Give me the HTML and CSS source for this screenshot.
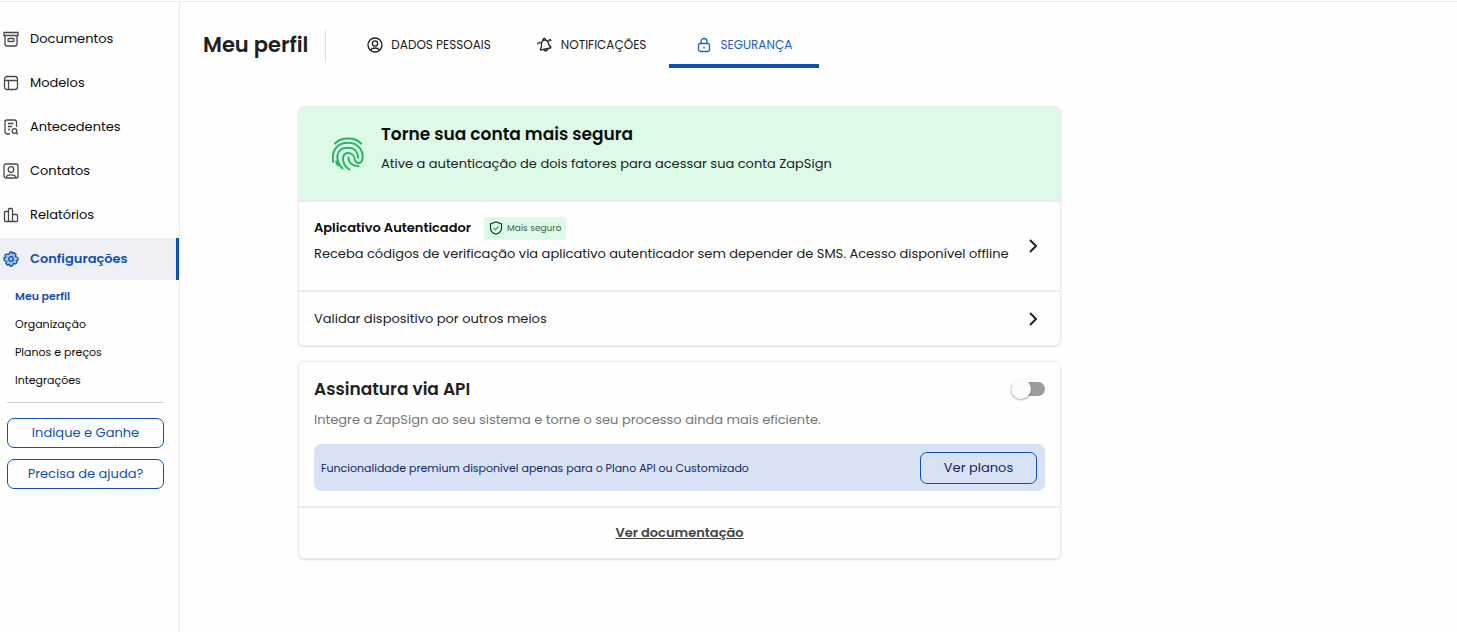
FILE: index.html
```html
<!DOCTYPE html>
<html lang="pt-BR">
<head>
<meta charset="utf-8">
<meta name="viewport" content="width=device-width, initial-scale=1">
<title>Meu perfil</title>
<link rel="stylesheet" href="styles.css">
</head>
<body>
<div class="app">
  <aside class="sidebar">
    <nav class="menu" aria-label="Principal">
      <a class="menu-item" href="#"><svg class="icon" viewBox="0 0 16 16"><path d="M1 1.500h14v3H1zM2 4.500v8.500a2 2 0 0 0 2 2h8a2 2 0 0 0 2-2V4.500"/><rect x="5" y="7.500" width="6" height="3" rx="1"/></svg>Documentos</a>
      <a class="menu-item" href="#"><svg class="icon" viewBox="0 0 16 16"><rect x="1.500" y="1.500" width="13" height="13" rx="2.500"/><path d="M1.500 5.500h13M5.500 5.500v9"/></svg>Modelos</a>
      <a class="menu-item" href="#"><svg class="icon" viewBox="0 0 16 16"><path d="M7 15H4a2 2 0 0 1-2-2V3a2 2 0 0 1 2-2h7.500a2 2 0 0 1 2 2v5M5 4.500h5.500M5 7.500h4M5 10.500h2"/><circle cx="11.500" cy="12" r="2.300"/><path d="M13.200 13.700l1.800 1.600"/></svg>Antecedentes</a>
      <a class="menu-item" href="#"><svg class="icon" viewBox="0 0 16 16"><rect x="1" y="1" width="14" height="14" rx="2"/><circle cx="8" cy="6.500" r="2.800"/><path d="M3 14.500c.5-2 2.500-2.700 5-2.700s4.500.7 5 2.700"/></svg>Contatos</a>
      <a class="menu-item" href="#"><svg class="icon" viewBox="0 0 16 16"><path d="M5.500 14.500h-3a1 1 0 0 1-1-1v-8a1 1 0 0 1 1-1h3M5.500 14.500v-12a1 1 0 0 1 1-1h2a1 1 0 0 1 1 1v12zM9.500 7.500h4a1 1 0 0 1 1 1v5a1 1 0 0 1-1 1h-4"/></svg>Relatórios</a>
      <a class="menu-item active" href="#" aria-current="true"><svg class="icon gear" viewBox="0 0 16 16"><path d="M6.300 2.700 7 1h2l.7 1.700 1.700-.8 1.600 1.500-.7 1.800L15 7v2l-1.700.8.700 1.800-1.500 1.500-1.800-.7L9 15H7l-.8-1.700-1.800.7-1.500-1.500.7-1.800L1 9V7l1.700-.8L2 4.400l1.500-1.500 1.800.7z"/><circle cx="8" cy="8" r="2.300"/></svg>Configurações</a>
    </nav>
    <nav class="submenu" aria-label="Configurações">
      <a class="sub-item current" href="#" aria-current="page">Meu perfil</a>
      <a class="sub-item" href="#">Organização</a>
      <a class="sub-item" href="#">Planos e preços</a>
      <a class="sub-item" href="#">Integrações</a>
    </nav>
    <div class="side-actions">
      <button class="outline" type="button">Indique e Ganhe</button>
      <button class="outline" type="button">Precisa de ajuda?</button>
    </div>
  </aside>
  <main class="main">
    <header class="header">
      <h1 class="title">Meu perfil</h1>
      <nav class="tabs" aria-label="Perfil">
        <a class="tab" href="#"><svg class="icon" viewBox="0 0 16 16"><circle cx="8" cy="8" r="7"/><circle cx="8" cy="6.500" r="2.600"/><path d="M3.500 13c1-1.500 2.500-2 4.500-2s3.500.5 4.500 2"/></svg>DADOS PESSOAIS</a>
        <a class="tab" href="#"><svg class="icon" viewBox="0 0 16 16"><path d="M4 13c-.7-.1-.8-1-.3-1.600 1-1 1-2 .8-3.600-.3-2.600.8-4.300 2.700-4.700s3.700.7 4.200 3.200c.3 1.600.8 2.400 2 3.100.7.500.6 1.400-.1 1.600zM6.200 3.400 6 2.200c.4-1 1.800-1.200 2.200-.3l.3 1.200M7.200 12.600c.5 2 3 1.900 3.400-.6M1 7.500c-.2-1 0-1.700.3-2.300M2.800 6.500c0-.7.100-1.200.3-1.700M11.300 2.900l1.300 1.400M12.600 1.900l1.700 2"/></svg>NOTIFICAÇÕES</a>
        <a class="tab selected" href="#" aria-current="page"><svg class="icon" viewBox="0 0 16 16"><rect x="2.500" y="6.500" width="11" height="8" rx="2"/><path d="M5 6.500V4.500a3 3 0 0 1 6 0v2M8 9.800v1.600"/></svg>SEGURANÇA</a>
      </nav>
    </header>
    <div class="content">
      <section class="card">
        <div class="banner">
          <svg class="finger" viewBox="0 0 32 34"><path d="M3 6.500C9-.3 23-.3 29 6.500M1.200 25C-1 14 5 5.800 16 5.800s16.500 9.200 14.200 17.200c-1.200 4-6.200 3.800-7.200 0-.8-4-2-7-7-7-4 0-6 4-4.500 9 1 3.500 3 5.800 6 7.500M10.500 31.500C2.500 23 3.500 10.800 16 10.800c7 0 10 4.700 10 10M6 28.500C5 27 4.500 26 4.200 24.500M16.500 20.500c0 5 4 9 10 8.500"/></svg>
          <div>
            <h2 class="heading">Torne sua conta mais segura</h2>
            <p class="text">Ative a autenticação de dois fatores para acessar sua conta ZapSign</p>
          </div>
        </div>
        <a class="row tall" href="#">
          <span class="row-copy">
            <span class="row-title"><strong>Aplicativo Autenticador</strong><span class="badge"><svg class="shield" viewBox="0 0 14 14"><path d="M7 .8 12.500 3v4c0 3-2.300 5.300-5.500 6.300C3.800 12.300 1.500 10 1.500 7V3z"/><path class="tick" d="m4.500 7 1.800 1.800 3.200-3.300"/></svg>Mais seguro</span></span>
            <span class="text">Receba códigos de verificação via aplicativo autenticador sem depender de SMS. Acesso disponível offline</span>
          </span>
          <svg class="chevron" viewBox="0 0 8 14"><path d="m1 1 6 6-6 6"/></svg>
        </a>
        <a class="row" href="#">
          <span class="text">Validar dispositivo por outros meios</span>
          <svg class="chevron" viewBox="0 0 8 14"><path d="m1 1 6 6-6 6"/></svg>
        </a>
      </section>
      <section class="card">
        <div class="api">
          <div class="api-head">
            <h2 class="heading soft"><label for="api">Assinatura via API</label></h2>
            <input class="switch" id="api" type="checkbox" role="switch">
          </div>
          <p class="text muted">Integre a ZapSign ao seu sistema e torne o seu processo ainda mais eficiente.</p>
          <div class="notice">
            <span>Funcionalidade premium disponível apenas para o Plano API ou Customizado</span>
            <button class="outline plans" type="button">Ver planos</button>
          </div>
        </div>
        <div class="doc"><a class="doc-link" href="#">Ver documentação</a></div>
      </section>
    </div>
  </main>
</div>
</body>
</html>
```
FILE: styles.css
```css
* { box-sizing: border-box; }
body { margin: 0; padding-top: 1px; background: #fefefe; color: #212121; font: 13px/20px Poppins, Inter, "Open Sans", sans-serif; }
a { color: inherit; text-decoration: none; }
h1, h2, p { margin: 0; }
svg { fill: none; stroke: currentColor; flex: none; }
.app { display: flex; min-height: calc(100vh - 1px); border-top: 1px solid #ebebeb; }
.sidebar { width: 180px; flex: none; border-right: 1px solid #ebebeb; padding-top: 16px; }
.menu { display: flex; flex-direction: column; gap: 2px; color: #0a0a0a; }
.menu-item { display: flex; align-items: center; gap: 11px; height: 42px; padding: 0 0 0 3px; }
.icon { width: 16px; height: 16px; stroke-width: 1.3; color: #4b4747; }
.menu-item.active { background: #eff0f5; color: #124fb3; font-weight: 600; border-right: 3px solid #124fb3; }
.active .icon { color: #124fb3; }
.gear { fill: #9cc7ec; }
.submenu { display: flex; flex-direction: column; gap: 8px; margin: 0 15px 0 7px; padding: 6px 8px 12px; border-bottom: 1px solid #cfcfcf; font-size: 11px; color: #0a0a0a; }
.current { color: #124fb3; font-weight: 600; }
.side-actions { display: flex; flex-direction: column; gap: 11px; padding: 15px 15px 0 7px; }
.outline { height: 30px; padding: 0; border: 1px solid #124fb3; border-radius: 7px; background: transparent; color: #124fb3; font: inherit; font-size: 13px; }
.main { flex: 1; min-width: 0; padding: 0 23px; }
.header { display: flex; align-items: flex-start; height: 66px; padding-top: 20px; }
.title { margin-top: 8px; padding: 0 17px 2px 0; border-right: 1px solid #dedede; font-size: 21px; line-height: 30px; font-weight: 600; }
.tabs { display: flex; align-self: stretch; margin-left: 18px; }
.tab { display: flex; align-items: flex-start; justify-content: center; gap: 8px; min-width: 150px; padding: 13px 23px 0; font-size: 12px; line-height: 20px; border-bottom: 4px solid transparent; }
.tab .icon { margin-top: 2px; color: #212121; }
.tab.selected { border-color: #124fb3; color: #1c60bd; }
.tab.selected .icon { color: #1c60bd; }
.content { display: flex; flex-direction: column; gap: 15px; max-width: 763px; margin: 38px 0 0 95px; }
.card { border: 1px solid #ebebeb; border-radius: 6px; box-shadow: 0 1px 2px #00000022; overflow: hidden; }
.banner { display: flex; gap: 17px; padding: 16px 33px 26px; background: #dcfae6; }
.finger { width: 32px; height: 34px; margin-top: 14px; stroke: #27b667; stroke-width: 2; stroke-linecap: round; }
.heading { font-size: 17px; line-height: 22px; font-weight: 600; color: #0a0a0a; }
.heading.soft { color: #212121; }
.banner .text { margin-top: 9px; }
strong { font-weight: 600; }
.row { display: flex; align-items: center; justify-content: space-between; gap: 8px; min-height: 55px; padding: 0 23px 0 15px; border-top: 2px solid #ebebeb; }
.row.tall { min-height: 90px; }
.row-copy { display: flex; flex-direction: column; gap: 4px; padding-bottom: 12px; }
.row-title { display: flex; align-items: center; gap: 13px; color: #0a0a0a; }
.badge { display: flex; align-items: center; gap: 4px; height: 23px; padding: 0 5px; border-radius: 3px; background: #dcfae6; color: #4c5a52; font-size: 9px; }
.shield { width: 14px; height: 14px; stroke: #17352a; stroke-width: 1.2; }
.tick { stroke: #27b667; }
.chevron { width: 8px; height: 14px; stroke: #262222; stroke-width: 2; }
.api { padding: 16px 15px 15px; }
.api-head { display: flex; align-items: center; justify-content: space-between; }
.switch { appearance: none; position: relative; width: 34px; height: 14px; margin: 0; border-radius: 7px; background: #9b9f9b; }
.switch::before { content: ""; position: absolute; left: 0; top: -3px; width: 20px; height: 20px; border-radius: 50%; background: #fcfafa; box-shadow: 0 1px 2px #0006; }
.muted { margin-top: 10px; color: #757575; }
.notice { display: flex; align-items: center; justify-content: space-between; margin-top: 14px; padding: 8px 8px 7px 7px; border-radius: 7px; background: #d7e2f4; color: #14265c; font-size: 11px; }
.plans { width: 117px; height: 32px; color: #14265c; }
.doc { padding: 15px; border-top: 2px solid #ebebeb; text-align: center; }
.doc-link { font-weight: 600; text-decoration: underline; color: #444; }
```
